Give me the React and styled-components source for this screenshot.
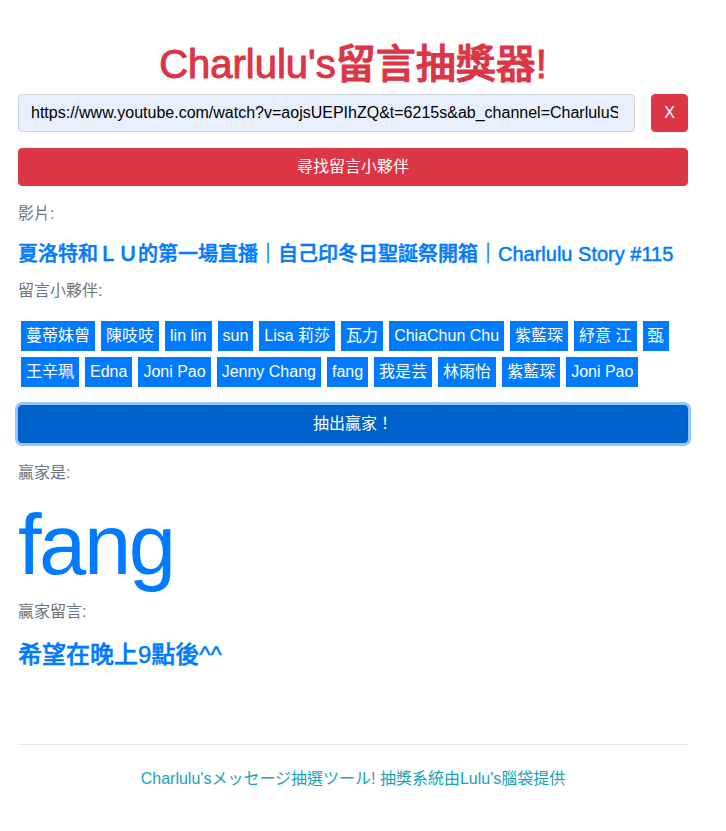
import styled, { createGlobalStyle } from "styled-components";

const color = {
  red: "#dc3545",
  blue: "#007bff",
  blueActive: "#0062cc",
  muted: "#6c757d",
  info: "#17a2b8",
  white: "#fff",
};

const GlobalStyle = createGlobalStyle`
  body {
    margin: 0;
    background: ${color.white};
    font-family: "Liberation Sans", "Noto Sans CJK TC", sans-serif;
    font-size: 16px;
    line-height: 1.5;
    color: #212529;
  }
`;

const Page = styled.div`
  width: 670px;
  padding: 40px 38px 40px 18px;
`;

const Title = styled.h1`
  margin: 0 0 6px;
  font-size: 40px;
  line-height: 1.2;
  font-weight: 500;
  text-align: center;
  color: ${color.red};
  -webkit-text-stroke: 1px ${color.red};
`;

const SearchRow = styled.div`
  display: flex;
  align-items: center;
  gap: 16px;
`;

const UrlInput = styled.input`
  flex: 1;
  min-width: 0;
  height: 38px;
  box-sizing: border-box;
  padding: 6px 16px 6px 12px;
  border: 1px solid #ced4da;
  border-radius: 4px;
  background: #e8f0fe;
  color: #000;
  font-family: inherit;
  font-size: 16px;
  outline: none;
`;

const Button = styled.button`
  display: block;
  box-sizing: border-box;
  height: 38px;
  width: ${(p) => (p.$block ? "100%" : "auto")};
  padding: 6px 12px;
  border: 1px solid ${(p) => (p.$variant === "primary" ? "#005cbf" : color.red)};
  border-radius: 4px;
  background: ${(p) => (p.$variant === "primary" ? color.blueActive : color.red)};
  box-shadow: ${(p) =>
    p.$focused ? "0 0 0 3px rgba(38, 143, 255, 0.5)" : "none"};
  color: ${color.white};
  font-family: inherit;
  font-size: 16px;
  line-height: 24px;
  margin-top: ${(p) => p.$top || 0}px;
`;

const Label = styled.div`
  margin-top: ${(p) => p.$top || 0}px;
  font-size: 16px;
  line-height: 24px;
  color: ${color.muted};
`;

const Highlight = styled.div`
  margin-top: ${(p) => p.$top || 0}px;
  font-size: ${(p) => p.$size || 20}px;
  line-height: 1.2;
  font-weight: 500;
  color: ${color.blue};
  -webkit-text-stroke: 0.5px ${color.blue};
  white-space: nowrap;
`;

const BadgeList = styled.div`
  display: flex;
  flex-wrap: wrap;
  margin-top: 15px;
  margin-bottom: 15px;
`;

const Badge = styled.span`
  margin: 3px;
  padding: 4px 5px;
  font-size: 16px;
  line-height: 22px;
  background: ${color.blue};
  color: ${color.white};
`;

const Winner = styled.div`
  margin-top: 9px;
  font-size: 85px;
  line-height: 1.2;
  font-weight: 300;
  letter-spacing: -2.5px;
  color: ${color.blue};
`;

const Divider = styled.hr`
  margin: 74px 0 0;
  border: 0;
  border-top: 1px solid #e6e6e6;
`;

const Footer = styled.div`
  margin-top: 22px;
  text-align: center;
  font-size: 16px;
  line-height: 24px;
  color: ${color.info};
`;

const friends = [
  "蔓蒂妹曾",
  "陳吱吱",
  "lin lin",
  "sun",
  "Lisa 莉莎",
  "瓦力",
  "ChiaChun Chu",
  "紫藍琛",
  "紓意 江",
  "甄",
  "王辛珮",
  "Edna",
  "Joni Pao",
  "Jenny Chang",
  "fang",
  "我是芸",
  "林雨怡",
  "紫藍琛",
  "Joni Pao",
];

const App = () => {
  return (
    <Page>
      <GlobalStyle />
      <Title>Charlulu's留言抽獎器!</Title>
      <SearchRow>
        <UrlInput
          readOnly
          value="https://www.youtube.com/watch?v=aojsUEPIhZQ&t=6215s&ab_channel=CharluluStory"
        />
        <Button>X</Button>
      </SearchRow>
      <Button $block $top={16}>
        尋找留言小夥伴
      </Button>
      <Label $top={16}>影片:</Label>
      <Highlight $top={16}>
        夏洛特和ＬＵ的第一場直播｜自己印冬日聖誕祭開箱｜Charlulu Story #115
      </Highlight>
      <Label $top={13}>留言小夥伴:</Label>
      <BadgeList>
        {friends.map((name, i) => (
          <Badge key={i}>{name}</Badge>
        ))}
      </BadgeList>
      <Button $block $variant="primary" $focused>
        抽出贏家！
      </Button>
      <Label $top={18}>贏家是:</Label>
      <Winner>fang</Winner>
      <Label $top={4}>贏家留言:</Label>
      <Highlight $top={17} $size={24}>
        希望在晚上9點後^^
      </Highlight>
      <Divider />
      <Footer>Charlulu'sメッセージ抽選ツール! 抽獎系統由Lulu's腦袋提供</Footer>
    </Page>
  );
};

export default App;
